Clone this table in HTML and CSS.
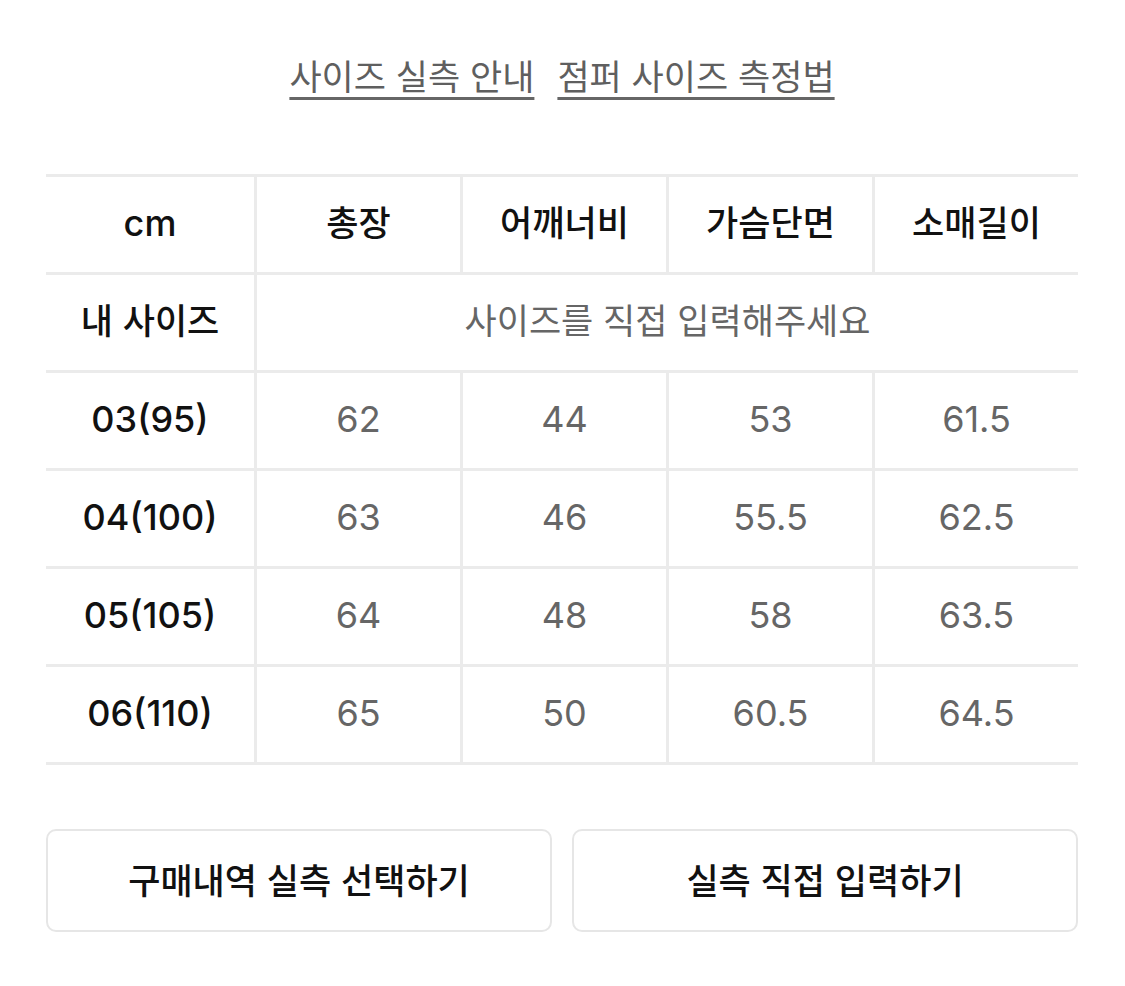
FILE: index.html
```html
<!DOCTYPE html>
<html lang="ko">
<head>
<meta charset="utf-8">
<link rel="stylesheet" href="styles.css">
</head>
<body>
<div class="page">
  <div class="links">
    <a class="link">사이즈 실측 안내</a>
    <a class="link">점퍼 사이즈 측정법</a>
  </div>
  <div class="table">
    <div class="cell head num">cm</div>
    <div class="cell head">총장</div>
    <div class="cell head">어깨너비</div>
    <div class="cell head">가슴단면</div>
    <div class="cell head">소매길이</div>

    <div class="cell label">내 사이즈</div>
    <div class="cell hint span4">사이즈를 직접 입력해주세요</div>

    <div class="cell label num">03(95)</div>
    <div class="cell val num">62</div>
    <div class="cell val num">44</div>
    <div class="cell val num">53</div>
    <div class="cell val num">61.5</div>

    <div class="cell label num">04(100)</div>
    <div class="cell val num">63</div>
    <div class="cell val num">46</div>
    <div class="cell val num">55.5</div>
    <div class="cell val num">62.5</div>

    <div class="cell label num">05(105)</div>
    <div class="cell val num">64</div>
    <div class="cell val num">48</div>
    <div class="cell val num">58</div>
    <div class="cell val num">63.5</div>

    <div class="cell label num">06(110)</div>
    <div class="cell val num">65</div>
    <div class="cell val num">50</div>
    <div class="cell val num">60.5</div>
    <div class="cell val num">64.5</div>
  </div>
  <div class="buttons">
    <button class="btn">구매내역 실측 선택하기</button>
    <button class="btn">실측 직접 입력하기</button>
  </div>
</div>
</body>
</html>
```

FILE: styles.css
```css
html, body {
  margin: 0;
  padding: 0;
  background: #ffffff;
}
body {
  font-family: "Noto Sans CJK KR", sans-serif;
  color: #111;
}
.page {
  padding: 52px 47px 0 46px;
}
.links {
  display: flex;
  justify-content: center;
  gap: 23px;
  height: 46px;
  align-items: center;
}
.link {
  font-size: 35px;
  line-height: 46px;
  color: #5f5f5f;
  text-decoration: underline;
  text-decoration-thickness: 3px;
  text-underline-offset: 7px;
  text-decoration-color: #666;
}
.table {
  margin-top: 76px;
  display: grid;
  grid-template-columns: 208px repeat(4, 1fr);
  grid-auto-rows: 95px;
  gap: 3px;
  background: #ebebeb;
  padding: 3px 0;
}
.cell {
  background: #fff;
  display: flex;
  align-items: center;
  justify-content: center;
  font-size: 35px;
  padding-bottom: 8px;
}
.num {
  font-family: "Inter", "Noto Sans CJK KR", sans-serif;
  font-size: 36px;
  padding-bottom: 4px;
}
.head {
  color: #111;
  font-weight: 500;
}
.label {
  color: #111;
  font-weight: 500;
}
.val {
  color: #666;
  font-weight: 400;
}
.hint {
  color: #666;
}
.span4 {
  grid-column: span 4;
}
.buttons {
  margin-top: 64px;
  display: grid;
  grid-template-columns: 1fr 1fr;
  gap: 20px;
}
.btn {
  height: 103px;
  background: #fff;
  border: 2px solid #e6e6e6;
  border-radius: 10px;
  font-family: "Noto Sans CJK KR", sans-serif;
  font-size: 35px;
  font-weight: 500;
  color: #111;
  padding-bottom: 6px;
}
```
